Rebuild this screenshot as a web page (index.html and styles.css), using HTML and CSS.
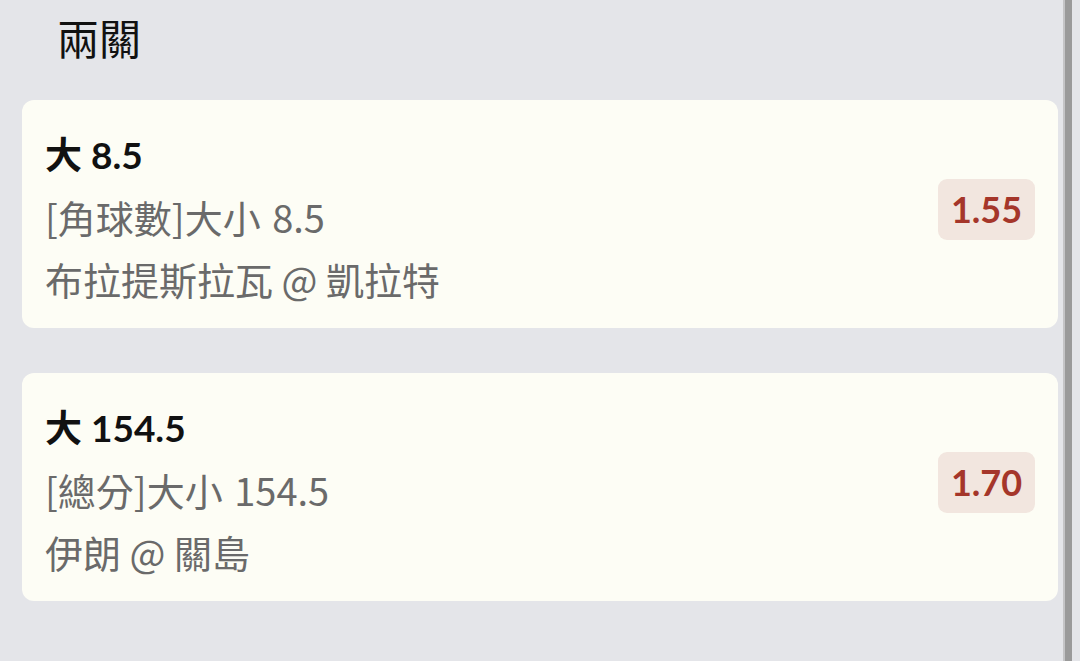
FILE: index.html
```html
<!DOCTYPE html>
<html lang="zh-Hant">
<head>
  <meta charset="UTF-8">
  <meta name="viewport" content="width=device-width, initial-scale=1.0">
  <title>兩關</title>
  <link rel="stylesheet" href="styles.css">
</head>
<body>
  <div class="page">
    <div class="content">
      <h2 class="title">兩關</h2>

      <div class="leg">
        <div class="info">
          <div class="pick">大 8.5</div>
          <div class="market">[角球數]大小 8.5</div>
          <div class="match">布拉提斯拉瓦 @ 凱拉特</div>
        </div>
        <div class="odds">1.55</div>
      </div>

      <div class="leg">
        <div class="info">
          <div class="pick">大 154.5</div>
          <div class="market">[總分]大小 154.5</div>
          <div class="match">伊朗 @ 關島</div>
        </div>
        <div class="odds">1.70</div>
      </div>
    </div>
    <div class="scrollbar"></div>
  </div>
</body>
</html>
```

FILE: styles.css
```css
html, body {
  margin: 0;
  height: 100%;
}
body {
  font-family: Lato, "Noto Sans CJK TC", sans-serif;
  background: #e4e5e9;
  overflow: hidden;
}
.page {
  display: flex;
  height: 100%;
}
.content {
  width: 1036px;
  padding: 0 0 0 22px;
}
.title {
  margin: 0;
  padding: 12px 0 0 35px;
  height: 100px;
  box-sizing: border-box;
  font-family: "Noto Sans CJK TC", sans-serif;
  font-size: 42px;
  line-height: 50px;
  font-weight: 400;
  color: #111;
}
.leg {
  display: flex;
  align-items: center;
  justify-content: space-between;
  background: #fdfdf5;
  border-radius: 12px;
  padding: 24px 23px 18px 23px;
  margin-bottom: 45px;
}
.info div {
  line-height: 62px;
  white-space: nowrap;
}
.pick {
  font-size: 37px;
  font-weight: 700;
  color: #111;
}
.market, .match {
  font-family: "Noto Sans CJK TC", sans-serif;
  font-size: 38px;
  color: #6a6a6a;
}
.market {
  word-spacing: 3px;
}
.odds {
  background: #f2e6df;
  color: #a5362a;
  font-weight: 700;
  font-size: 36px;
  border-radius: 9px;
  width: 97px;
  height: 61px;
  line-height: 61px;
  text-align: center;
  margin-bottom: 16px;
}
.scrollbar {
  width: 7px;
  margin-left: 5px;
  background: #9a9a9a;
  border-left: 2px solid #c4c4c6;
}
```
